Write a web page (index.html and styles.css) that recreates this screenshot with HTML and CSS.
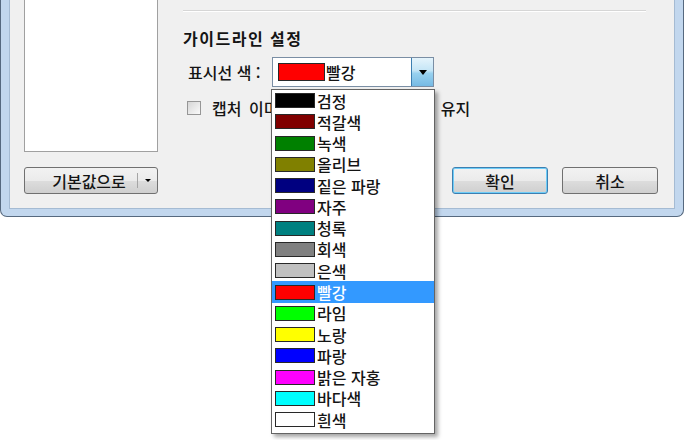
FILE: index.html
```html
<!DOCTYPE html>
<html lang="ko">
<head>
  <meta charset="UTF-8" />
  <title>가이드라인 설정</title>
  <link rel="stylesheet" href="styles.css">
</head>
<body>

<div class="window">
  <div class="client">
    <div class="list-pane"></div>

    <div class="settings">
      <div class="rule"></div>
      <h2 class="heading">가이드라인 설정</h2>

      <div class="field">
        <span class="label">표시선 색 :</span>
        <div class="combo">
          <div class="combo-value"><span class="swatch red"></span>빨강</div>
          <span class="combo-arrow"></span>

          <ul class="dropdown">
            <li><span class="swatch black"></span>검정</li>
            <li><span class="swatch maroon"></span>적갈색</li>
            <li><span class="swatch green"></span>녹색</li>
            <li><span class="swatch olive"></span>올리브</li>
            <li><span class="swatch navy"></span>짙은 파랑</li>
            <li><span class="swatch purple"></span>자주</li>
            <li><span class="swatch teal"></span>청록</li>
            <li><span class="swatch gray"></span>회색</li>
            <li><span class="swatch silver"></span>은색</li>
            <li class="selected"><span class="swatch red"></span>빨강</li>
            <li><span class="swatch lime"></span>라임</li>
            <li><span class="swatch yellow"></span>노랑</li>
            <li><span class="swatch blue"></span>파랑</li>
            <li><span class="swatch fuchsia"></span>밝은 자홍</li>
            <li><span class="swatch aqua"></span>바다색</li>
            <li><span class="swatch white"></span>흰색</li>
          </ul>
        </div>
      </div>

      <label class="check"><span class="box"></span>캡처 이미지의 가로 세로 비율을 유지</label>
    </div>

    <div class="split-button">
      <span class="split-label">기본값으로</span>
      <span class="split-sep"></span>
      <span class="split-arrow"></span>
    </div>

    <div class="actions">
      <button class="btn default">확인</button>
      <button class="btn">취소</button>
    </div>
  </div>
</div>

</body>
</html>
```

FILE: styles.css
```css
:root {
  --text: rgb(20, 20, 20);
  --client: rgb(240, 240, 240);
  --frame: rgb(194, 215, 238);
  --frame-edge: rgb(86, 105, 127);
  --frame-inner: rgb(165, 187, 211);
  --select: rgb(51, 153, 255);
}

body {
  margin: 0;
  width: 684px;
  height: 440px;
  overflow: hidden;
  background: #fff;
  font-family: "Noto Sans CJK KR", "Noto Sans", sans-serif;
  font-size: 16px;
  font-weight: 500;
  color: var(--text);
}

.window {
  width: 684px;
  box-sizing: border-box;
  background: var(--frame);
  border: 1px solid var(--frame-edge);
  border-top: none;
  border-radius: 0 0 7px 7px;
  padding: 0 8px 7px;
}

.client {
  background: var(--client);
  border: 1px solid var(--frame-inner);
  border-top: none;
  display: grid;
  grid-template-columns: 134px 1fr;
  grid-template-rows: 152px auto;
  column-gap: 25px;
  row-gap: 15px;
  padding: 0 16px 14px 14px;
}

.list-pane {
  background: #fff;
  border: 1px solid rgb(160, 160, 160);
  border-top: none;
}

.settings {
  padding-top: 10px;
  margin-right: 12px;
}

.rule {
  border-top: 1px solid rgb(214, 214, 214);
  border-bottom: 1px solid #fff;
}

.heading {
  margin: 16px 0 0;
  font-size: 16px;
  font-weight: bold;
  line-height: 20px;
  letter-spacing: 1.5px;
}

.field {
  display: flex;
  align-items: center;
  margin-top: 9px;
  padding-left: 5px;
}

.label {
  width: 84px;
  line-height: 30px;
}

.combo {
  position: relative;
  width: 162px;
  height: 30px;
  box-sizing: border-box;
  border: 1px solid rgb(122, 142, 164);
  background: #fff;
  display: flex;
}

.combo-value {
  flex: 1;
  display: flex;
  align-items: center;
  padding-left: 5px;
  line-height: 20px;
}

.combo-value .swatch {
  width: 47px;
  height: 18px;
  margin-right: 1px;
}

.combo-arrow {
  width: 21px;
  border-left: 1px solid rgb(60, 127, 177);
  background: linear-gradient(rgb(229, 244, 252), rgb(196, 229, 246) 45%, rgb(152, 209, 239) 55%, rgb(118, 186, 228));
  display: flex;
  align-items: center;
  justify-content: center;
}

.combo-arrow::after {
  content: "";
  border-left: 4px solid transparent;
  border-right: 4px solid transparent;
  border-top: 5px solid #000;
}

.dropdown {
  position: absolute;
  top: 31px;
  left: -2px;
  width: 164px;
  box-sizing: border-box;
  margin: 0;
  padding: 0 0 3px;
  list-style: none;
  background: #fff;
  border: 1px solid rgb(100, 100, 100);
  box-shadow: 3px 3px 4px rgba(0, 0, 0, 0.35);
}

.dropdown li {
  height: 21.27px;
  line-height: 18px;
  display: flex;
  align-items: center;
  padding-left: 3px;
}

.dropdown li.selected {
  background: var(--select);
  color: #fff;
}

.swatch {
  display: inline-block;
  flex: none;
  width: 40px;
  height: 15px;
  box-sizing: border-box;
  border: 1px solid rgb(40, 40, 40);
  margin-right: 2px;
}

.black { background: #000; }
.maroon { background: #800000; }
.green { background: #008000; }
.olive { background: #808000; }
.navy { background: #000080; }
.purple { background: #800080; }
.teal { background: #008080; }
.gray { background: #808080; }
.silver { background: #c0c0c0; }
.red { background: #ff0000; }
.lime { background: #00ff00; }
.yellow { background: #ffff00; }
.blue { background: #0000ff; }
.fuchsia { background: #ff00ff; }
.aqua { background: #00ffff; }
.white { background: #fff; }

.check {
  display: flex;
  align-items: center;
  margin-top: 11px;
  padding-left: 4px;
  line-height: 20px;
  word-spacing: 3px;
  white-space: nowrap;
}

.check .box {
  width: 14px;
  height: 14px;
  box-sizing: border-box;
  border: 1px solid rgb(150, 150, 150);
  background: linear-gradient(135deg, rgb(214, 214, 214), rgb(250, 250, 250));
  margin-right: 11px;
}

.btn,
.split-button {
  height: 27px;
  box-sizing: border-box;
  border: 1px solid rgb(112, 112, 112);
  border-radius: 3px;
  background: linear-gradient(rgb(242, 242, 242), rgb(235, 235, 235) 50%, rgb(221, 221, 221) 51%, rgb(207, 207, 207));
  font: inherit;
  color: var(--text);
  padding: 0;
}

.btn.default {
  border-color: rgb(60, 127, 177);
  box-shadow: inset 0 0 0 1px rgb(110, 205, 248);
}

.actions {
  display: flex;
  justify-content: flex-end;
  gap: 14px;
}

.actions .btn {
  width: 96px;
}

.split-button {
  display: flex;
  align-items: center;
}

.split-label {
  flex: 1;
  text-align: center;
  padding-left: 16px;
}

.split-sep {
  width: 1px;
  height: 15px;
  background: rgb(165, 165, 165);
}

.split-arrow {
  width: 19px;
  display: flex;
  justify-content: center;
}

.split-arrow::after {
  content: "";
  border-left: 3px solid transparent;
  border-right: 3px solid transparent;
  border-top: 3px solid #000;
}
```
